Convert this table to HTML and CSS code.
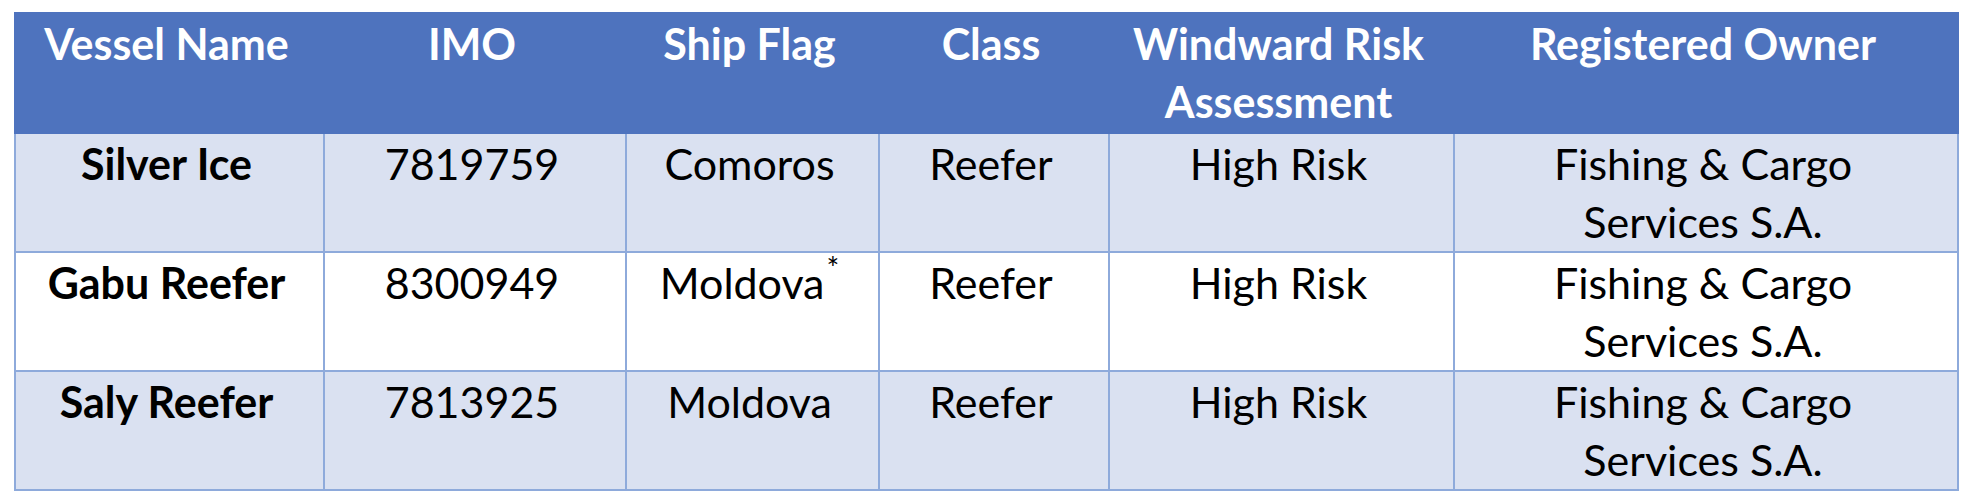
FILE: index.html
```html
<!DOCTYPE html>
<html lang="en">
<head>
<meta charset="utf-8">
<title>Vessels</title>
<link rel="stylesheet" href="styles.css">
</head>
<body>
<table class="vessels">
  <colgroup>
    <col class="c1"><col class="c2"><col class="c3"><col class="c4"><col class="c5"><col class="c6">
  </colgroup>
  <thead>
    <tr class="head">
      <th>Vessel Name</th>
      <th>IMO</th>
      <th>Ship Flag</th>
      <th>Class</th>
      <th>Windward Risk Assessment</th>
      <th>Registered Owner</th>
    </tr>
  </thead>
  <tbody>
    <tr class="band r1">
      <td class="name">Silver Ice</td>
      <td>7819759</td>
      <td>Comoros</td>
      <td>Reefer</td>
      <td>High Risk</td>
      <td>Fishing &amp; Cargo<br>Services S.A.</td>
    </tr>
    <tr class="plain r2">
      <td class="name">Gabu Reefer</td>
      <td>8300949</td>
      <td>Moldova<sup class="star">*</sup></td>
      <td>Reefer</td>
      <td>High Risk</td>
      <td>Fishing &amp; Cargo<br>Services S.A.</td>
    </tr>
    <tr class="band r3">
      <td class="name">Saly Reefer</td>
      <td>7813925</td>
      <td>Moldova</td>
      <td>Reefer</td>
      <td>High Risk</td>
      <td>Fishing &amp; Cargo<br>Services S.A.</td>
    </tr>
  </tbody>
</table>
</body>
</html>
```
FILE: styles.css
```css
html, body {
  margin: 0;
  background: #ffffff;
}
body {
  padding: 12px 0 0 14px;
  font-family: Lato, "Open Sans", "Liberation Sans", sans-serif;
  color: #000000;
}
.vessels {
  border-collapse: collapse;
  table-layout: fixed;
  width: 1943px;
  font-size: 43px;
  line-height: 58px;
}
.c1 { width: 309px; }
.c2 { width: 302px; }
.c3 { width: 253px; }
.c4 { width: 230px; }
.c5 { width: 345px; }
.c6 { width: 504px; }

.vessels th,
.vessels td {
  text-align: center;
  vertical-align: top;
  padding: 1px 8px 0 2px;
  border: 2px solid #8eaadb;
}
.head {
  height: 120px;
}
.head th {
  background: #4e73be;
  border-color: #4e73be;
  color: #ffffff;
  font-weight: 700;
}
.r1 { height: 117px; }
.r2 { height: 118px; }
.r3 { height: 118px; }
.band td { background: #dae1f1; }
.plain td { background: #ffffff; }
.vessels td { font-weight: 400; }
.vessels td.name { font-weight: 700; }
.star {
  font-size: 30px;
  line-height: 0;
  vertical-align: 20px;
  margin-left: 2px;
}
```
